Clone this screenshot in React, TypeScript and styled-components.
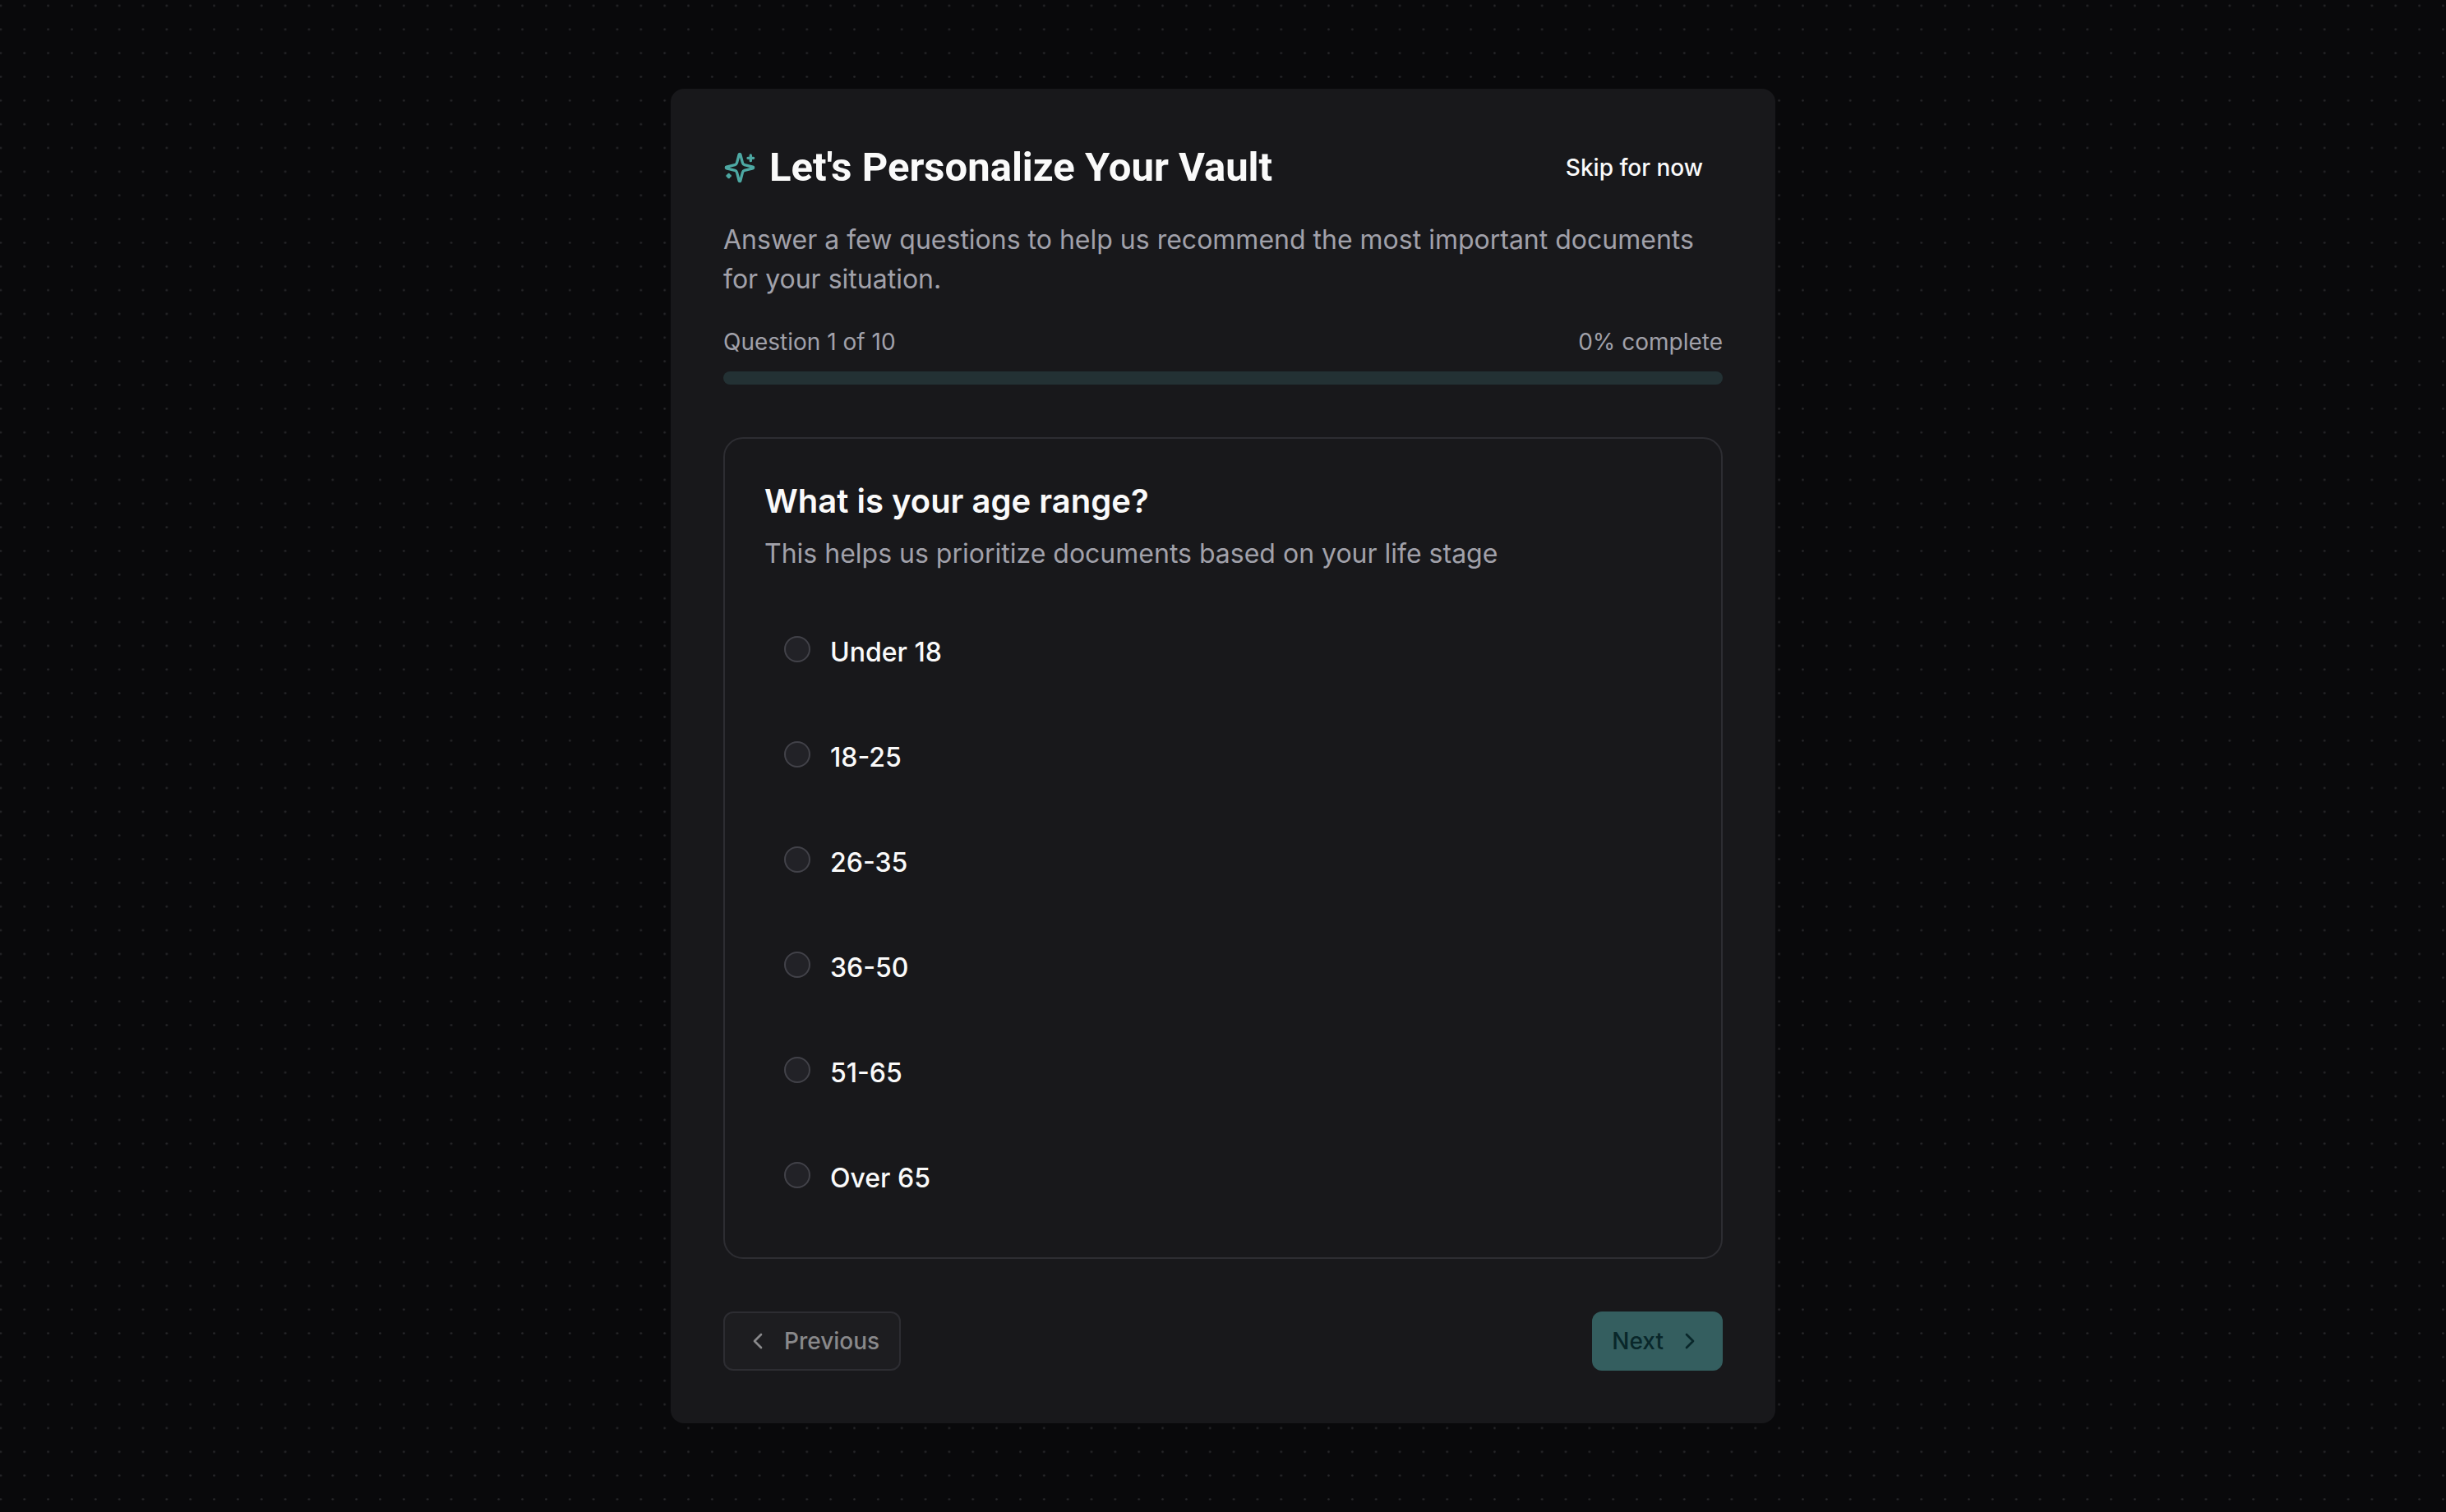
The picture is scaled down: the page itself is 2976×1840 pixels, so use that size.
import { useState } from "react";
import styled, { createGlobalStyle } from "styled-components";
import { ChevronLeft, ChevronRight } from "lucide-react";

const GlobalStyle = createGlobalStyle`
  *, *::before, *::after { box-sizing: border-box; }
  body {
    margin: 0;
    background: #09090b;
    color: #fafafa;
    font-family: Inter, "Liberation Sans", sans-serif;
    font-size: 32px;
    line-height: 48px;
  }
  h1, h2, p { margin: 0; }
`;

const Page = styled.main`
  position: relative;
  display: flex;
  align-items: center;
  justify-content: center;
  min-height: 100vh;
  padding: 64px;
`;

const DotField = styled.svg`
  position: absolute;
  inset: 0;
  width: 100%;
  height: 100%;
`;

const Card = styled.section`
  position: relative;
  display: flex;
  flex-direction: column;
  gap: 64px;
  width: 100%;
  max-width: 1344px;
  padding: 64px;
  border-radius: 16px;
  background: #18181b;
`;

const Header = styled.header`
  display: flex;
  flex-direction: column;
  gap: 32px;
`;

const Row = styled.div`
  display: flex;
  align-items: center;
  justify-content: space-between;
`;

const TitleGroup = styled.div`
  display: flex;
  align-items: center;
  gap: 16px;
  color: #4da8a3;
`;

const Title = styled.h1`
  color: #fafafa;
  font-family: Roboto, Inter, sans-serif;
  font-size: 49px;
  font-weight: 700;
  line-height: 64px;
`;

const Muted = styled.p`
  color: #a1a1aa;
`;

const Progress = styled.div`
  display: flex;
  flex-direction: column;
  gap: 16px;
`;

const ProgressLabels = styled(Row)`
  color: #a1a1aa;
  font-size: 28px;
  line-height: 40px;
`;

const Track = styled.div`
  height: 16px;
  overflow: hidden;
  border-radius: 8px;
  background: #233134;
`;

const Fill = styled.div`
  height: 100%;
  background: #4da8a3;
`;

const Question = styled.fieldset`
  min-width: 0;
  margin: 0;
  padding: 48px;
  border: 2px solid #2d2d32;
  border-radius: 24px;
`;

const QuestionHead = styled.div`
  display: flex;
  flex-direction: column;
  gap: 12px;
  margin-bottom: 48px;
`;

const QuestionTitle = styled.h2`
  font-size: 40px;
  font-weight: 600;
  line-height: 56px;
`;

const Options = styled.div`
  display: flex;
  flex-direction: column;
  gap: 32px;
`;

const Option = styled.label`
  display: flex;
  align-items: flex-start;
  gap: 24px;
  padding: 24px;
  border-radius: 16px;
  color: #fafafa;
  font-weight: 500;
  cursor: pointer;
`;

const Radio = styled.input`
  appearance: none;
  flex: none;
  width: 32px;
  height: 32px;
  margin: 4px 0 0;
  border: 2px solid #424249;
  border-radius: 50%;
  background: #222227;
  &:checked {
    border-color: #4da8a3;
    background: radial-gradient(circle, #4da8a3 8px, #222227 9px);
  }
`;

const Button = styled.button<{ $kind: "ghost" | "outline" | "primary" }>`
  display: inline-flex;
  align-items: center;
  gap: 16px;
  height: ${(p) => (p.$kind === "ghost" ? "64px" : "72px")};
  padding: 0 24px;
  border: ${(p) => (p.$kind === "outline" ? "2px solid #2d2d32" : "0")};
  border-radius: 12px;
  background: ${(p) =>
    ({ ghost: "transparent", outline: "#1d1d20", primary: "#345e5f" })[p.$kind]};
  color: ${(p) =>
    ({ ghost: "#fafafa", outline: "#89898b", primary: "#09272a" })[p.$kind]};
  font: 500 28px/40px Inter, "Liberation Sans", sans-serif;
`;

function Sparkles() {
  return (
    <svg
      width="40"
      height="40"
      viewBox="0 0 24 24"
      fill="none"
      stroke="currentColor"
      strokeWidth="2"
      strokeLinecap="round"
      strokeLinejoin="round"
      aria-hidden="true"
    >
      <path d="M9.937 15.5A2 2 0 0 0 8.5 14.063l-6.135-1.582a.5.5 0 0 1 0-.962L8.5 9.936A2 2 0 0 0 9.937 8.5l1.582-6.135a.5.5 0 0 1 .963 0L14.063 8.5A2 2 0 0 0 15.5 9.937l6.135 1.581a.5.5 0 0 1 0 .964L15.5 14.063a2 2 0 0 0-1.437 1.437l-1.582 6.135a.5.5 0 0 1-.963 0z" />
      <path d="M20 3v4M22 5h-4M4 17v2M5 18H3" />
    </svg>
  );
}

const ranges = ["Under 18", "18-25", "26-35", "36-50", "51-65", "Over 65"];

export default function App() {
  const [selected, setSelected] = useState("");
  const percent = 0;

  return (
    <>
      <GlobalStyle />
      <Page>
        <DotField aria-hidden="true">
          <defs>
            <pattern id="dots" x="-13.5" y="-7.5" width="28.85" height="28.85" patternUnits="userSpaceOnUse">
              <circle cx="14.4" cy="14.4" r="1.3" fill="#29292c" />
            </pattern>
          </defs>
          <rect width="100%" height="100%" fill="url(#dots)" />
        </DotField>
        <Card>
          <Header>
            <Row>
              <TitleGroup>
                <Sparkles />
                <Title>Let's Personalize Your Vault</Title>
              </TitleGroup>
              <Button type="button" $kind="ghost">Skip for now</Button>
            </Row>
            <Muted>
              Answer a few questions to help us recommend the most important documents for your situation.
            </Muted>
            <Progress>
              <ProgressLabels>
                <span>Question 1 of 10</span>
                <span>{percent}% complete</span>
              </ProgressLabels>
              <Track role="progressbar" aria-label="Questions answered" aria-valuenow={percent}>
                <Fill style={{ width: `${percent}%` }} />
              </Track>
            </Progress>
          </Header>
          <Question aria-labelledby="question-title">
            <QuestionHead>
              <QuestionTitle id="question-title">What is your age range?</QuestionTitle>
              <Muted>This helps us prioritize documents based on your life stage</Muted>
            </QuestionHead>
            <Options>
              {ranges.map((range) => (
                <Option key={range}>
                  <Radio
                    type="radio"
                    name="age"
                    value={range}
                    checked={selected === range}
                    onChange={() => setSelected(range)}
                  />
                  {range}
                </Option>
              ))}
            </Options>
          </Question>
          <Row>
            <Button type="button" $kind="outline" disabled>
              <ChevronLeft size={32} aria-hidden="true" />
              Previous
            </Button>
            <Button type="button" $kind="primary" disabled={!selected}>
              Next
              <ChevronRight size={32} aria-hidden="true" />
            </Button>
          </Row>
        </Card>
      </Page>
    </>
  );
}
